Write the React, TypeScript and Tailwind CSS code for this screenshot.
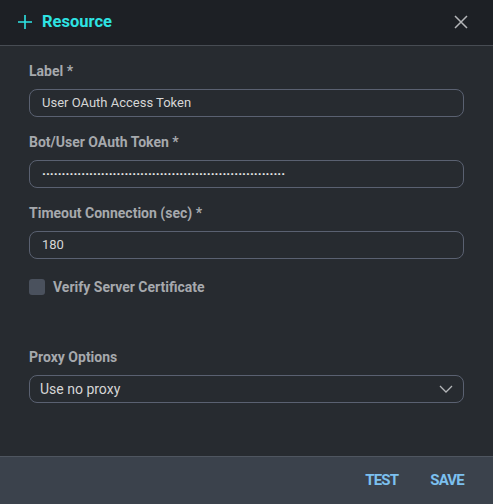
import React from "react";

const font = { fontFamily: "Roboto, 'Liberation Sans', sans-serif" };

function Label({ children }: { children: React.ReactNode }) {
  return (
    <div className="text-[14px] leading-4 font-bold text-[#a6a9ad]">{children}</div>
  );
}

export default function App() {
  const dots = "·".repeat(62);
  return (
    <div className="w-[493px] h-[504px] flex flex-col bg-[#272b30]" style={font}>
      <div className="h-[46px] shrink-0 flex items-center justify-between bg-[#1d2025] border-b border-[#474c53] pl-[17px] pr-[25px] pb-[2px]">
        <div className="flex items-center gap-[9px]">
          <svg width="16" height="16" viewBox="0 0 16 16" fill="none" stroke="#2ee3e3" strokeWidth="1.6">
            <path d="M8 1v14M1 8h14" />
          </svg>
          <span className="text-[16.5px] font-bold text-[#2ee3e3] leading-5">Resource</span>
        </div>
        <svg width="14" height="14" viewBox="0 0 14 14" fill="none" stroke="#b4b6b9" strokeWidth="1.5">
          <path d="M1 1l12 12M13 1L1 13" />
        </svg>
      </div>
      <div className="flex-1 px-[29px] pt-[17px]">
        <Label>Label *</Label>
        <div className="mt-[10px] h-[28px] rounded-lg border border-[#5a6171] flex items-center px-3 text-[13px] text-[#d6d6d6]">
          User OAuth Access Token
        </div>
        <div className="mt-[17px]">
          <Label>Bot/User OAuth Token *</Label>
        </div>
        <div className="mt-[10px] h-[28px] rounded-lg border border-[#5a6171] flex items-center px-3 text-[13px] font-bold text-[#e8e8e8]">
          {dots}
        </div>
        <div className="mt-[17px]">
          <Label>Timeout Connection (sec) *</Label>
        </div>
        <div className="mt-[10px] h-[28px] rounded-lg border border-[#5a6171] flex items-center px-3 text-[13px] text-[#d6d6d6]">
          180
        </div>
        <div className="mt-5 flex items-center gap-2">
          <div className="w-4 h-4 rounded-[3px] bg-[#4a515d]" />
          <Label>Verify Server Certificate</Label>
        </div>
        <div className="mt-[54px]">
          <Label>Proxy Options</Label>
        </div>
        <div className="mt-[10px] h-[28px] rounded-lg border border-[#5a6171] flex items-center justify-between pl-[10px] pr-[10px] text-[14px] text-[#d6d6d6]">
          <span>Use no proxy</span>
          <svg width="14" height="8" viewBox="0 0 14 8" fill="none" stroke="#b4b6b9" strokeWidth="1.3">
            <path d="M1 1l6 6 6-6" />
          </svg>
        </div>
      </div>
      <div className="h-[48px] shrink-0 bg-[#3b424c] border-t border-[#4f5660] flex items-center justify-end gap-[32px] pr-[29px]">
        <span className="text-[15px] font-bold tracking-[-0.8px] text-[#7cc0ef]">TEST</span>
        <span className="text-[15px] font-bold tracking-[-0.8px] text-[#7cc0ef]">SAVE</span>
      </div>
    </div>
  );
}
